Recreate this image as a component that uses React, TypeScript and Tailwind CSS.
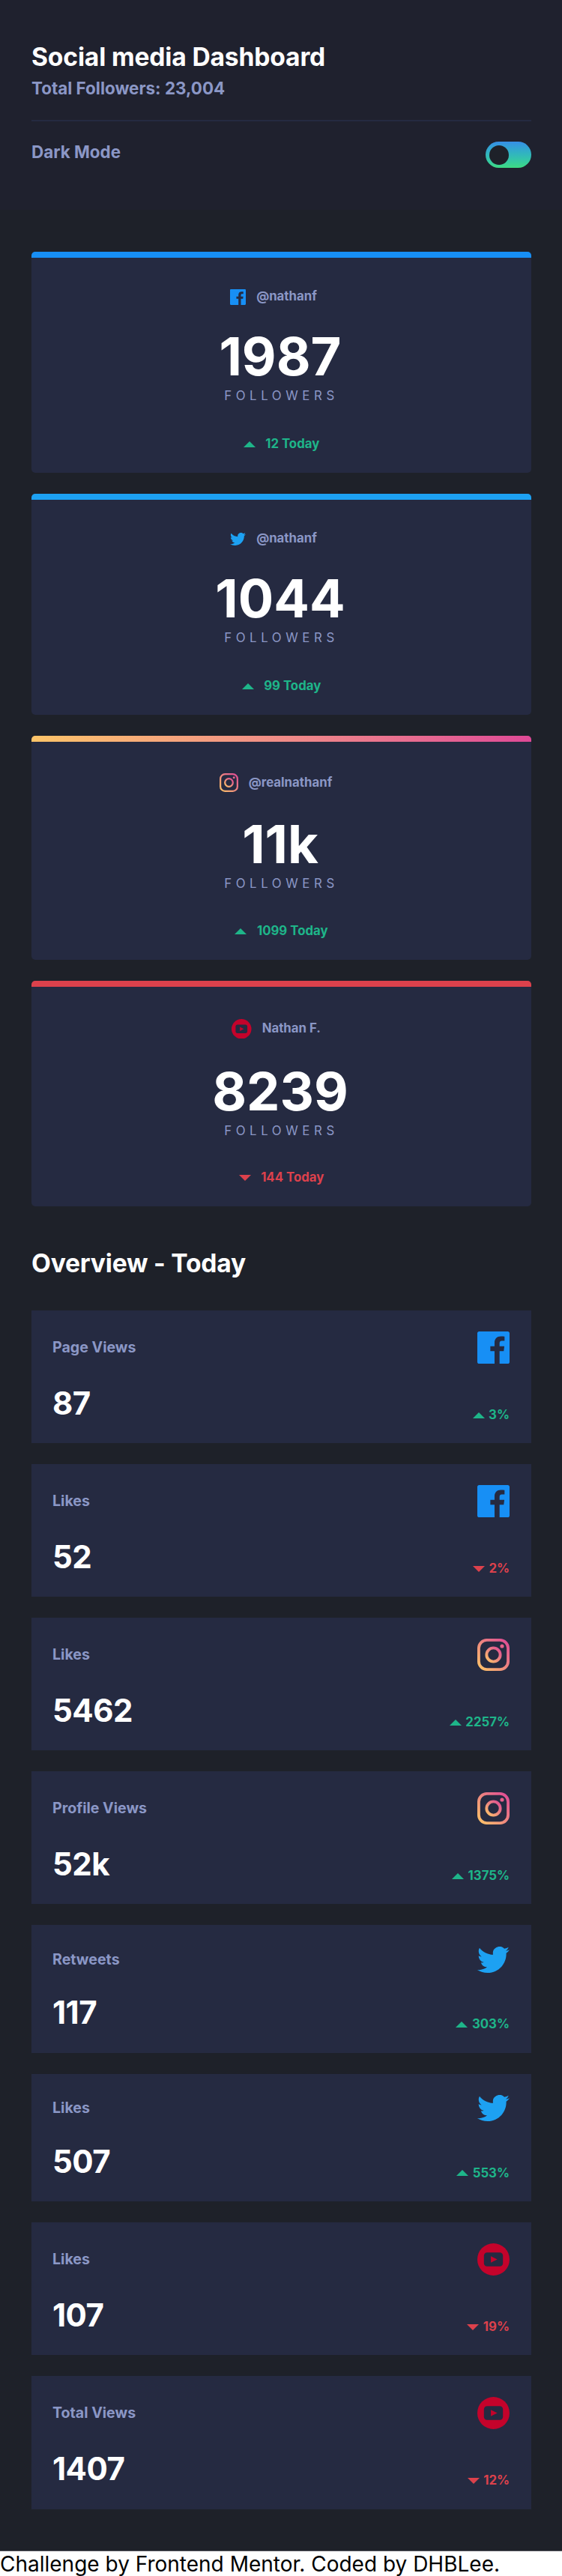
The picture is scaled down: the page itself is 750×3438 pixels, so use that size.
import { useId } from "react";
import type { ReactNode } from "react";

type Network = "facebook" | "twitter" | "instagram" | "youtube";

function Logo({ network, className }: { network: Network; className: string }) {
  const id = useId();
  if (network === "facebook") {
    return (
      <svg viewBox="0 0 20 20" className={className}>
        <path
          fill="#178FF5"
          d="M18.896 0H1.104C.494 0 0 .494 0 1.104v17.793C0 19.506.494 20 1.104 20h9.58v-7.745H8.076V9.237h2.606V7.01c0-2.583 1.578-3.99 3.883-3.99 1.104 0 2.052.082 2.329.119v2.7h-1.598c-1.254 0-1.496.597-1.496 1.47v1.928h2.989l-.39 3.018h-2.6V20h5.098c.608 0 1.102-.494 1.102-1.104V1.104C20 .494 19.506 0 18.896 0z"
        />
      </svg>
    );
  }
  if (network === "twitter") {
    return (
      <svg viewBox="0 0 24 19.5" className={className}>
        <path
          fill="#1DA1F2"
          transform="translate(0 -2.248)"
          d="M23.953 4.57a10 10 0 01-2.825.775 4.958 4.958 0 002.163-2.723c-.951.555-2.005.959-3.127 1.184a4.92 4.92 0 00-8.384 4.482C7.69 8.095 4.067 6.13 1.64 3.162a4.822 4.822 0 00-.666 2.475c0 1.71.87 3.213 2.188 4.096a4.904 4.904 0 01-2.228-.616v.06a4.923 4.923 0 003.946 4.827 4.996 4.996 0 01-2.212.085 4.936 4.936 0 004.604 3.417 9.867 9.867 0 01-6.102 2.105c-.39 0-.779-.023-1.17-.067a13.995 13.995 0 007.557 2.209c9.053 0 13.998-7.496 13.998-13.985 0-.21 0-.42-.015-.63A9.935 9.935 0 0024 4.59z"
        />
      </svg>
    );
  }
  if (network === "instagram") {
    return (
      <svg viewBox="0 0 20 20" className={className}>
        <defs>
          <linearGradient id={id} x1="0%" y1="100%" x2="100%" y2="0%">
            <stop offset="0%" stopColor="#FDC468" />
            <stop offset="100%" stopColor="#DF4996" />
          </linearGradient>
        </defs>
        <g stroke={`url(#${id})`} strokeWidth="1.8" fill="none">
          <rect x="0.9" y="0.9" width="18.2" height="18.2" rx="5" />
          <circle cx="10" cy="10" r="4.25" />
        </g>
        <circle cx="15.34" cy="4.66" r="1.2" fill="#E8608C" />
      </svg>
    );
  }
  return (
    <svg viewBox="0 0 20 20" className={className}>
      <circle cx="10" cy="10" r="10" fill="#C4032B" />
      <rect x="4.1" y="5.7" width="11.8" height="8.6" rx="2" fill="#252A41" />
      <path d="M8.4 8v4l4-2z" fill="#C4032B" />
    </svg>
  );
}

function Arrow({ up }: { up: boolean }) {
  return (
    <svg viewBox="0 0 16 8" className="mt-px h-2 w-4 shrink-0">
      {up ? <path fill="#1EB589" d="M0 8L8 0l8 8z" /> : <path fill="#DC414C" d="M0 0l8 8 8-8z" />}
    </svg>
  );
}

interface Follower {
  network: Network;
  handle: string;
  count: string;
  today: string;
  up: boolean;
  card: string;
  bar: string;
  head: string;
  icon: string;
}

const followers: Follower[] = [
  { network: "facebook", handle: "@nathanf", count: "1987", today: "12 Today", up: true, card: "h-[295px]", bar: "bg-[#178ff5]", head: "h-[44px] pr-[21px]", icon: "size-[21px]" },
  { network: "twitter", handle: "@nathanf", count: "1044", today: "99 Today", up: true, card: "h-[295px]", bar: "bg-[#1da1f2]", head: "h-[44px] pr-[21px]", icon: "h-[17px] w-[21px]" },
  { network: "instagram", handle: "@realnathanf", count: "11k", today: "1099 Today", up: true, card: "h-[299px]", bar: "bg-linear-to-r from-[#fdc468] to-[#df4996]", head: "h-[49px] pr-[15px]", icon: "size-[25px]" },
  { network: "youtube", handle: "Nathan F.", count: "8239", today: "144 Today", up: false, card: "h-[301px]", bar: "bg-[#dc414c]", head: "h-[51.5px] pr-[14px]", icon: "size-[26.5px]" },
];

function FollowerCard({ f }: { f: Follower }) {
  return (
    <article className={`flex flex-col items-center overflow-hidden rounded-[5px] bg-[#252a41] pb-[29px] ${f.card}`}>
      <div className={`h-2 w-full shrink-0 ${f.bar}`} />
      <div className={`mt-[30px] flex shrink-0 items-center gap-[14px] text-[16.8px] font-bold text-[#8b97c6] ${f.head}`}>
        <Logo network={f.network} className={f.icon} />
        <span>{f.handle}</span>
      </div>
      <p className="mt-[15px] pr-[3px] text-[70.5px] leading-[85px] font-bold text-white">{f.count}</p>
      <p className="text-[16.8px] leading-5 tracking-[5.6px] text-[#8b97c6] uppercase">Followers</p>
      <div className={`mt-auto flex items-center gap-[13.5px] text-[16.8px] leading-5 font-bold ${f.up ? "text-[#1eb589]" : "text-[#dc414c]"}`}>
        <Arrow up={f.up} />
        <span>{f.today}</span>
      </div>
    </article>
  );
}

interface Stat {
  label: string;
  value: string;
  change: string;
  up: boolean;
  network: Network;
}

const stats: Stat[] = [
  { label: "Page Views", value: "87", change: "3%", up: true, network: "facebook" },
  { label: "Likes", value: "52", change: "2%", up: false, network: "facebook" },
  { label: "Likes", value: "5462", change: "2257%", up: true, network: "instagram" },
  { label: "Profile Views", value: "52k", change: "1375%", up: true, network: "instagram" },
  { label: "Retweets", value: "117", change: "303%", up: true, network: "twitter" },
  { label: "Likes", value: "507", change: "553%", up: true, network: "twitter" },
  { label: "Likes", value: "107", change: "19%", up: false, network: "youtube" },
  { label: "Total Views", value: "1407", change: "12%", up: false, network: "youtube" },
];

function Row({ children, className }: { children: ReactNode; className: string }) {
  return <div className={`flex justify-between ${className}`}>{children}</div>;
}

function StatCard({ s }: { s: Stat }) {
  const bird = s.network === "twitter";
  return (
    <article className={`bg-[#252a41] pt-7 pr-[29px] pl-7 ${bird ? "h-[170.5px]" : "h-[177.1px]"}`}>
      <Row className={`items-center ${bird ? "h-[36px]" : "h-[43px]"}`}>
        <h3 className="text-[19.6px] font-bold text-[#8b97c6]">{s.label}</h3>
        <Logo network={s.network} className={bird ? "h-[35px] w-[43px]" : "size-[43px]"} />
      </Row>
      <Row className="mt-7 h-[50px] items-end">
        <p className="text-[42px] leading-[50px] font-bold tracking-[-0.5px] text-white">{s.value}</p>
        <div className={`flex items-center gap-[5.5px] text-[16.8px] leading-5 font-bold ${s.up ? "text-[#1eb589]" : "text-[#dc414c]"}`}>
          <Arrow up={s.up} />
          <span>{s.change}</span>
        </div>
      </Row>
    </article>
  );
}

export default function App() {
  return (
    <div className="h-[3438px] w-[750px] overflow-hidden bg-white font-['Inter',sans-serif]">
      <div className="h-[3404px] bg-[#1e2129]">
        <header className="h-[280px] bg-[#1f212e] pt-[55px] pr-[41px] pl-[42px]">
          <h1 className="text-[33.6px] leading-[41px] font-bold tracking-[-0.15px] text-white">Social media Dashboard</h1>
          <p className="mt-2 text-[22.4px] leading-[27px] font-bold text-[#8b97c6]">Total Followers: 23,004</p>
          <div className="mt-[29px] h-[2px] bg-[#252a41]" />
          <div className="mt-[27px] flex justify-between">
            <span className="text-[22.4px] leading-[27px] font-bold text-[#8b97c6]">Dark Mode</span>
            <button className="h-[35px] w-[61px] rounded-full bg-linear-to-b from-[#378fe6] to-[#3eda82] p-[4.5px]">
              <span className="block size-[26px] rounded-full bg-[#1e2129]" />
            </button>
          </div>
        </header>
        <main className="pt-14 pr-[41px] pl-[42px]">
          <section className="flex flex-col gap-7">
            {followers.map((f) => (
              <FollowerCard key={f.network} f={f} />
            ))}
          </section>
          <h2 className="mt-[55px] mb-[43px] text-[33.6px] leading-[41px] font-bold tracking-[-0.2px] text-white">Overview - Today</h2>
          <section className="flex flex-col gap-7">
            {stats.map((s, i) => (
              <StatCard key={i} s={s} />
            ))}
          </section>
        </main>
      </div>
      <footer className="border-t border-[#56575e] text-[28px] leading-[34px] text-black">Challenge by Frontend Mentor. Coded by DHBLee.</footer>
    </div>
  );
}
